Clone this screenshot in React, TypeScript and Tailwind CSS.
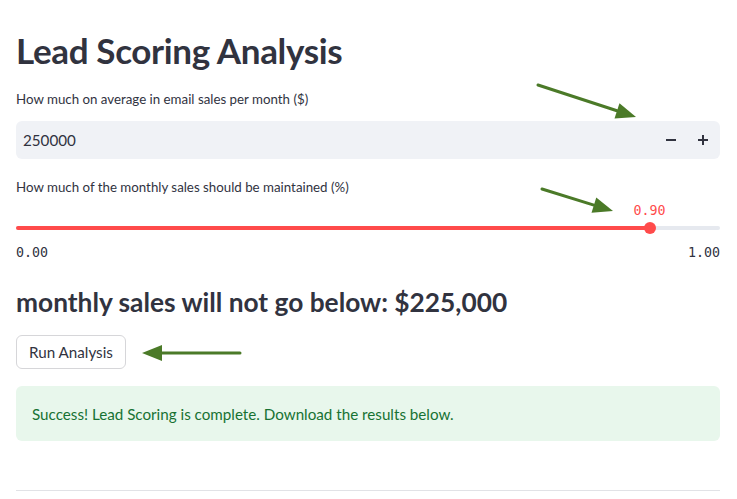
import * as React from 'react';

const FONT = '"Source Sans Pro", Lato, "Noto Sans", sans-serif';
const MONO = '"DejaVu Sans Mono", "Liberation Mono", monospace';

const Arrow: React.FC<{ x1: number; y1: number; x2: number; y2: number }> = ({ x1, y1, x2, y2 }) => {
    const ang = Math.atan2(y2 - y1, x2 - x1);
    const len = 20;
    const w = 8;
    const bx = x2 - len * Math.cos(ang);
    const by = y2 - len * Math.sin(ang);
    const px = -Math.sin(ang) * w;
    const py = Math.cos(ang) * w;
    return (
        <g>
            <line x1={x1} y1={y1} x2={bx} y2={by} stroke="#4b7a28" strokeWidth={3} strokeLinecap="round" />
            <polygon points={`${x2},${y2} ${bx + px},${by + py} ${bx - px},${by - py}`} fill="#4b7a28" />
        </g>
    );
};

const NumberInput: React.FC = () => (
    <div className="flex h-[38px] items-center rounded-md bg-[#f0f2f6] pl-[7px] pr-px">
        <span className="flex-1 text-[15.2px] text-[#31333f]">250000</span>
        <button className="flex h-full w-8 items-center justify-center text-[#31333f]">
            <svg width="10" height="10" viewBox="0 0 10 10"><rect x="0" y="4" width="10" height="2" fill="currentColor" /></svg>
        </button>
        <button className="flex h-full w-8 items-center justify-center text-[#31333f]">
            <svg width="10" height="10" viewBox="0 0 10 10"><rect x="0" y="4" width="10" height="2" fill="currentColor" /><rect x="4" y="0" width="2" height="10" fill="currentColor" /></svg>
        </button>
    </div>
);

const Slider: React.FC<{ value: number }> = ({ value }) => (
    <div className="pt-[29px]">
        <div className="relative h-[4px] rounded-full bg-[#e6e9ef]">
            <div className="absolute left-0 top-0 h-full rounded-full bg-[#ff4b4b]" style={{ width: `${value * 100}%` }} />
            <div
                className="absolute top-1/2 h-3 w-3 -translate-x-1/2 -translate-y-1/2 rounded-full bg-[#ff4b4b]"
                style={{ left: `${value * 100}%` }}
            />
            <div
                className="absolute bottom-[9px] -translate-x-1/2 text-[13.3px] text-[#ff4b4b]"
                style={{ left: `${value * 100}%`, fontFamily: MONO }}
            >
                {value.toFixed(2)}
            </div>
        </div>
        <div className="mt-[13px] flex justify-between text-[13.3px] text-[#31333f]" style={{ fontFamily: MONO }}>
            <span>0.00</span>
            <span>1.00</span>
        </div>
    </div>
);

export default function App() {
    return (
        <div className="relative min-h-[499px] w-[737px] bg-white text-[#31333f]" style={{ fontFamily: FONT }}>
            <div className="ml-4 w-[704px] pt-[29px]">
                <h1 className="text-[35px] font-bold leading-[1.2] tracking-[-0.01em] text-[#31333f]">Lead Scoring Analysis</h1>

                <div className="mt-[18px]">
                    <label className="block text-[13.3px] leading-[20px]">How much on average in email sales per month ($)</label>
                    <div className="mt-[12px]"><NumberInput /></div>
                </div>

                <div className="mt-[18px]">
                    <label className="block text-[13.3px] leading-[20px]">How much of the monthly sales should be maintained (%)</label>
                    <Slider value={0.9} />
                </div>

                <h2 className="mt-[24px] text-[26.3px] font-bold leading-[1.2]">monthly sales will not go below: $225,000</h2>

                <button className="mt-[17px] h-[34px] rounded-md border border-[#d6d6d9] bg-white px-3 text-[15.2px] text-[#31333f]">
                    Run Analysis
                </button>

                <div className="mt-[17px] flex h-[55px] items-center rounded-md bg-[#e8f7ec] px-4 text-[15.2px] text-[#177233]">
                    Success! Lead Scoring is complete. Download the results below.
                </div>

                <hr className="mt-[49px] border-t border-[#e1e2e6]" />
            </div>

            <svg className="pointer-events-none absolute left-0 top-0" width="737" height="499">
                <Arrow x1={538} y1={85} x2={636} y2={117} />
                <Arrow x1={542} y1={189} x2={613} y2={211} />
                <Arrow x1={240} y1={353} x2={142} y2={353} />
            </svg>
        </div>
    );
}
